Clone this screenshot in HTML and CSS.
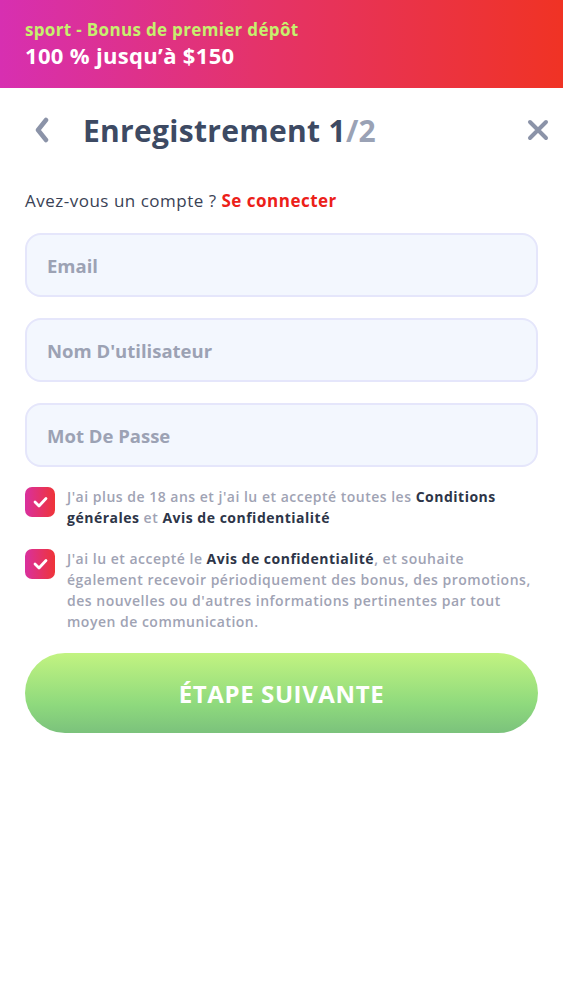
FILE: index.html
```html
<!DOCTYPE html>
<html lang="fr">
<head>
  <meta charset="UTF-8" />
  <meta name="viewport" content="width=device-width, initial-scale=1.0" />
  <title>Enregistrement</title>
  <link rel="stylesheet" href="styles.css">
</head>
<body>
  <div class="promo-banner">
    <div class="promo-title">sport - Bonus de premier dépôt</div>
    <div class="promo-amount">100 % jusqu’à $150</div>
  </div>

  <div class="register">
    <div class="register-header">
      <button class="icon-btn back-btn" aria-label="Retour">
        <svg width="16" height="26" viewBox="0 0 16 26"><path d="M12 3 L4 13 L12 23" fill="none" stroke="#8b93a8" stroke-width="4.5" stroke-linecap="round" stroke-linejoin="round"/></svg>
      </button>
      <h1 class="register-title">Enregistrement 1<span class="step-total">/2</span></h1>
      <button class="icon-btn close-btn" aria-label="Fermer">
        <svg width="22" height="22" viewBox="0 0 22 22"><path d="M3 3 L19 19 M19 3 L3 19" fill="none" stroke="#8b93a8" stroke-width="4" stroke-linecap="round"/></svg>
      </button>
    </div>

    <p class="login-hint">Avez-vous un compte ? <a href="#" class="login-link">Se connecter</a></p>

    <form class="register-form" onsubmit="return false">
      <input class="field" type="email" placeholder="Email" />
      <input class="field" type="text" placeholder="Nom D'utilisateur" />
      <input class="field" type="password" placeholder="Mot De Passe" />

      <label class="consent">
        <span class="checkbox">
          <svg width="15" height="12" viewBox="0 0 15 12"><path d="M2 6 L6 10 L13 2.5" fill="none" stroke="#fff" stroke-width="2.8" stroke-linecap="round" stroke-linejoin="round"/></svg>
        </span>
        <span class="consent-text">J'ai plus de 18 ans et j'ai lu et accepté toutes les <b>Conditions générales</b> et <b>Avis de confidentialité</b></span>
      </label>

      <label class="consent">
        <span class="checkbox">
          <svg width="15" height="12" viewBox="0 0 15 12"><path d="M2 6 L6 10 L13 2.5" fill="none" stroke="#fff" stroke-width="2.8" stroke-linecap="round" stroke-linejoin="round"/></svg>
        </span>
        <span class="consent-text">J'ai lu et accepté le <b>Avis de confidentialité</b>, et souhaite également recevoir périodiquement des bonus, des promotions, des nouvelles ou d'autres informations pertinentes par tout moyen de communication.</span>
      </label>

      <button class="next-btn" type="submit">ÉTAPE SUIVANTE</button>
    </form>
  </div>
</body>
</html>
```

FILE: styles.css
```css
body {
  margin: 0;
  background: #fff;
  font-family: "Open Sans", "Noto Sans", sans-serif;
  color: #3d4a63;
}
.promo-banner {
  height: 88px;
  box-sizing: border-box;
  padding: 18px 25px 0;
  background: linear-gradient(90deg, #d72fb1 0%, #e4336b 45%, #f03324 100%);
  font-weight: 700;
  letter-spacing: 0.33px;
}
.promo-title {
  color: #c6f06e;
  font-size: 17px;
  line-height: 24px;
}
.promo-amount {
  color: #fff;
  font-size: 22px;
  line-height: 26px;
}
.register {
  padding: 0 25px;
}
.register-header {
  display: flex;
  align-items: center;
  height: 84px;
}
.icon-btn {
  background: none;
  border: none;
  padding: 0;
  cursor: pointer;
  display: flex;
  align-items: center;
}
.back-btn {
  margin-left: 9px;
  width: 49px;
}
.close-btn {
  margin-left: auto;
  margin-right: -11px;
}
.register-title {
  margin: 0;
  font-size: 30px;
  font-weight: 700;
  color: #3d4a63;
  letter-spacing: 0.3px;
}
.step-total {
  color: #9aa2b5;
}
.login-hint {
  margin: 17px 0 20px;
  font-size: 17px;
  line-height: 24px;
  font-weight: 500;
  letter-spacing: 0.5px;
  color: #3a4255;
}
.login-link {
  color: #ec2019;
  font-weight: 700;
  text-decoration: none;
}
.register-form {
  display: flex;
  flex-direction: column;
}
.field {
  height: 64px;
  box-sizing: border-box;
  margin-bottom: 21px;
  padding: 0 20px;
  background: #f3f7fe;
  border: 2px solid #e5e6fb;
  border-radius: 16px;
  font-family: inherit;
  font-size: 18.5px;
  font-weight: 700;
  color: #3d4a63;
  outline: none;
}
.field::placeholder {
  color: #9ca2b4;
}
.consent {
  display: flex;
  align-items: flex-start;
  gap: 12px;
  margin-bottom: 20px;
  cursor: pointer;
}
.consent:first-of-type {
  margin-top: -2px;
}
.checkbox {
  flex: 0 0 30px;
  height: 30px;
  margin-top: 1px;
  border-radius: 7px;
  background: linear-gradient(90deg, #d9309e, #ef3438);
  display: flex;
  align-items: center;
  justify-content: center;
}
.consent-text {
  font-size: 14px;
  line-height: 21px;
  font-weight: 600;
  letter-spacing: 0.5px;
  color: #9fa3b4;
}
.consent-text b {
  font-weight: 700;
  color: #2d3548;
}
.next-btn {
  height: 80px;
  margin-top: 1px;
  border: none;
  border-radius: 40px;
  background: linear-gradient(180deg, #c2f381 0%, #8ed97d 65%, #7bc27c 100%);
  color: #fff;
  font-family: inherit;
  font-size: 24px;
  font-weight: 700;
  letter-spacing: 0.6px;
  cursor: pointer;
}
```
